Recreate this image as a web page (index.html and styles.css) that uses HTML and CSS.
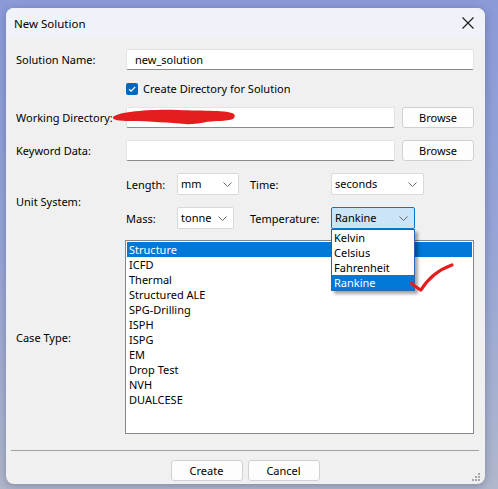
FILE: index.html
```html
<!DOCTYPE html>
<html lang="en">
<head>
    <meta charset="UTF-8">
    <title>New Solution</title>
    <link rel="stylesheet" href="styles.css">
</head>
<body>
    <div class="dialog">
        <div class="titlebar">
            <span class="title">New Solution</span>
            <svg class="close" width="12" height="12" viewBox="0 0 12 12">
                <path d="M0.5 0.5 L11.5 11.5 M11.5 0.5 L0.5 11.5" stroke="#1a1a1a" stroke-width="1.1" fill="none"/>
            </svg>
        </div>

        <div class="content">
            <div class="row">
                <label>Solution Name:</label>
                <div class="field"><div class="input">new_solution</div></div>
            </div>

            <div class="row check-row">
                <span></span>
                <div class="checkline">
                    <span class="checkbox">
                        <svg width="12" height="12" viewBox="0 0 12 12">
                            <path d="M3 6.2 L5.1 8.2 L9.2 3.8" stroke="#fff" stroke-width="1.2" fill="none"/>
                        </svg>
                    </span>
                    Create Directory for Solution
                </div>
            </div>

            <div class="row">
                <label>Working Directory:</label>
                <div class="field">
                    <div class="input"></div>
                    <button class="btn">Browse</button>
                </div>
            </div>

            <div class="row gap-top">
                <label>Keyword Data:</label>
                <div class="field">
                    <div class="input"></div>
                    <button class="btn">Browse</button>
                </div>
            </div>

            <div class="row gap-top">
                <label>Unit System:</label>
                <div class="units">
                    <span>Length:</span>
                    <div class="combo w-length">mm<svg class="chev" width="9" height="5" viewBox="0 0 9 5"><polyline points="0.5,0.5 4.5,4.5 8.5,0.5" fill="none" stroke="#666" stroke-width="1"/></svg></div>
                    <span>Time:</span>
                    <div class="combo w-time">seconds<svg class="chev" width="9" height="5" viewBox="0 0 9 5"><polyline points="0.5,0.5 4.5,4.5 8.5,0.5" fill="none" stroke="#666" stroke-width="1"/></svg></div>

                    <span>Mass:</span>
                    <div class="combo w-mass">tonne<svg class="chev" width="9" height="5" viewBox="0 0 9 5"><polyline points="0.5,0.5 4.5,4.5 8.5,0.5" fill="none" stroke="#666" stroke-width="1"/></svg></div>
                    <span>Temperature:</span>
                    <div class="combo w-temp focused">Rankine<svg class="chev" width="9" height="5" viewBox="0 0 9 5"><polyline points="0.5,0.5 4.5,4.5 8.5,0.5" fill="none" stroke="#666" stroke-width="1"/></svg>
                        <ul class="popup">
                            <li>Kelvin</li>
                            <li>Celsius</li>
                            <li>Fahrenheit</li>
                            <li class="sel">Rankine</li>
                        </ul>
                    </div>
                </div>
            </div>

            <div class="row list-row">
                <label>Case Type:</label>
                <ul class="listbox">
                    <li class="sel">Structure</li>
                    <li>ICFD</li>
                    <li>Thermal</li>
                    <li>Structured ALE</li>
                    <li>SPG-Drilling</li>
                    <li>ISPH</li>
                    <li>ISPG</li>
                    <li>EM</li>
                    <li>Drop Test</li>
                    <li>NVH</li>
                    <li>DUALCESE</li>
                </ul>
            </div>
        </div>

        <div class="footer">
            <button class="btn">Create</button>
            <button class="btn">Cancel</button>
        </div>

        <!-- size grip -->
        <svg class="grip" width="9" height="9" viewBox="0 0 9 9">
            <rect x="6" y="0" width="2" height="2" fill="#a8a8a8"/>
            <rect x="3" y="3" width="2" height="2" fill="#a8a8a8"/>
            <rect x="6" y="3" width="2" height="2" fill="#a8a8a8"/>
            <rect x="0" y="6" width="2" height="2" fill="#a8a8a8"/>
            <rect x="3" y="6" width="2" height="2" fill="#a8a8a8"/>
            <rect x="6" y="6" width="2" height="2" fill="#a8a8a8"/>
        </svg>

        <!-- red marks drawn over the screenshot -->
        <svg class="marks" width="479" height="476" viewBox="6 8 479 476">
            <path d="M113 117 C118 112, 148 109, 178 110 C204 111, 228 110, 234 114 C237 119, 231 121, 216 121 C201 122, 196 125, 185 124 C170 123, 150 121, 130 121 C119 121, 112 120, 113 117 Z" fill="#e41e1e"/>
            <path d="M411 283 Q417 288 421 290 Q432 272 452 265" fill="none" stroke="#e41e1e" stroke-width="3.2" stroke-linecap="round" stroke-linejoin="round"/>
        </svg>
    </div>
</body>
</html>
```

FILE: styles.css
```css
*{
    box-sizing: border-box;
}
body{
    margin: 0;
    height: 489px;
    overflow: hidden;
    background: linear-gradient(180deg, #8a9bd8 0%, #97a5d6 50%, #b0b8cc 100%);
    font-family: "Noto Sans", "Open Sans", sans-serif;
    font-size: 11px;
    color: #000;
}
.dialog{
    position: relative;
    margin: 8px 0 0 6px;
    width: 479px;
    height: 476px;
    background: #f0f0f0;
    border-radius: 8px;
    overflow: hidden;
    box-shadow: 0 2px 8px rgba(40, 50, 80, 0.35);
}
.titlebar{
    height: 30px;
    background: #eff2f8;
    display: flex;
    align-items: center;
    justify-content: space-between;
    padding: 0 11px 0 8px;
}
.title{
    font-size: 11.5px;
}
.content{
    padding: 11px 11px 0 10px;
}
.row{
    display: grid;
    grid-template-columns: 110px 1fr;
    align-items: center;
}
.row label{
    line-height: 15px;
}
.field{
    display: flex;
    gap: 7px;
    height: 21px;
}
.input{
    flex: 1;
    height: 21px;
    background: #fff;
    border: 1px solid #e3e3e3;
    border-bottom-color: #8a8a8a;
    border-radius: 2px;
    padding: 0 0 0 8px;
    line-height: 19px;
}
.btn{
    width: 72px;
    height: 21px;
    padding: 0;
    background: #fdfdfd;
    border: 1px solid #d0d0d0;
    border-radius: 3px;
    font-family: inherit;
    font-size: 11px;
    color: #000;
}
.check-row{
    height: 37px;
}
.checkline{
    display: flex;
    align-items: center;
    gap: 5px;
}
.checkbox{
    width: 12px;
    height: 12px;
    background: #0067c0;
    border-radius: 2px;
    display: flex;
}
.gap-top{
    margin-top: 12px;
}
.units{
    display: grid;
    grid-template-columns: 51px 73px 81px auto;
    grid-auto-rows: 22px;
    row-gap: 12px;
    align-items: center;
}
.combo{
    position: relative;
    height: 22px;
    background: #fff;
    border: 1px solid #d9d9d9;
    border-radius: 2px;
    padding-left: 3px;
    line-height: 20px;
}
.chev{
    position: absolute;
    right: 6px;
    top: 8px;
}
.w-length{ width: 62px; }
.w-mass{ width: 57px; }
.w-time{ width: 93px; }
.w-temp{ width: 84px; }
.combo.focused{
    background: #cce4f7;
    border-color: #0078d7;
}
.popup{
    position: absolute;
    left: -1px;
    top: 21px;
    width: 84px;
    margin: 0;
    padding: 0;
    list-style: none;
    background: #fff;
    border: 1px solid #2a63b0;
    box-shadow: 3px 3px 3px rgba(0, 0, 0, 0.35);
    z-index: 2;
}
.popup li{
    height: 15px;
    line-height: 15px;
    padding-left: 2px;
}
.sel{
    background: #0078d7;
    color: #fff;
}
.list-row{
    margin-top: 11px;
}
.listbox{
    height: 194px;
    margin: 0 0 0 -1px;
    padding: 1px;
    list-style: none;
    background: #fff;
    border: 1px solid #828790;
}
.listbox li{
    height: 15px;
    line-height: 15px;
    padding-left: 2px;
}
.footer{
    margin: 16px 6px 0 5px;
    border-top: 1px solid #a0a0a0;
    padding-top: 9px;
    display: flex;
    justify-content: center;
    gap: 5px;
}
.grip{
    position: absolute;
    right: 4px;
    bottom: 2px;
}
.marks{
    position: absolute;
    left: 0;
    top: 0;
    pointer-events: none;
    z-index: 3;
}
```
